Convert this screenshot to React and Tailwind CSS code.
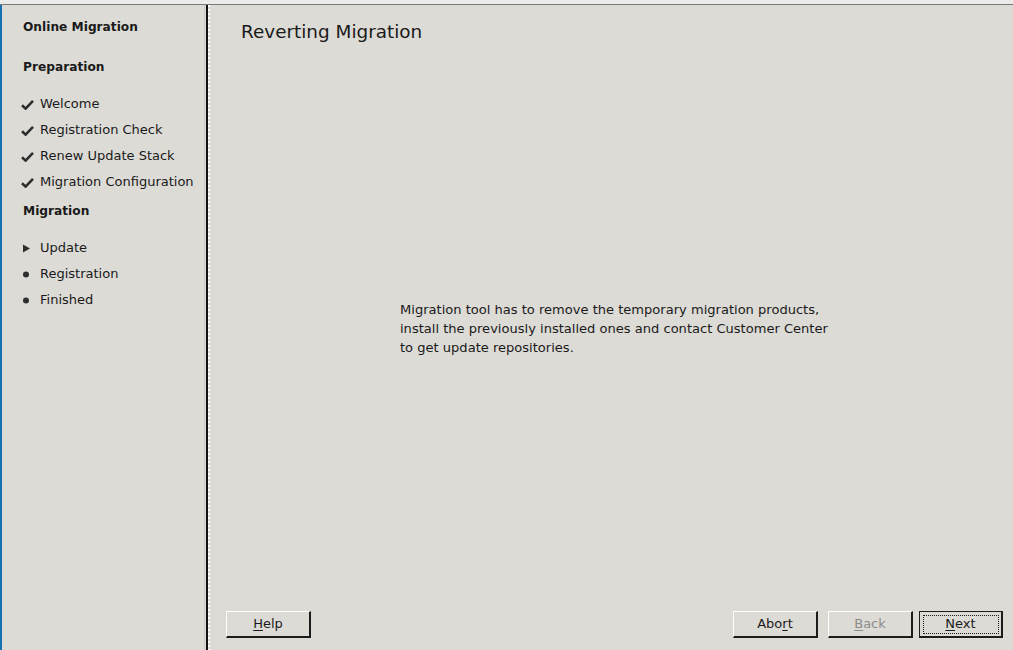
import React from "react";

const font = { fontFamily: '"DejaVu Sans", "Liberation Sans", sans-serif' };

function Check() {
  return (
    <svg width="13" height="11" viewBox="0 0 13 11" className="shrink-0">
      <path d="M1 6.2 L4.6 9.6 L12 1.8" stroke="#2e2e2e" strokeWidth="2.6" fill="none" strokeLinejoin="miter" />
    </svg>
  );
}

function Tri() {
  return (
    <svg width="13" height="11" viewBox="0 0 13 11" className="shrink-0">
      <path d="M2 1.5 L9 5.5 L2 9.5 Z" fill="#2e2e2e" />
    </svg>
  );
}

function Dot() {
  return (
    <svg width="13" height="11" viewBox="0 0 13 11" className="shrink-0">
      <circle cx="5" cy="5.5" r="3" fill="#2e2e2e" />
    </svg>
  );
}

function Item({ icon, children }) {
  return (
    <div className="flex items-center h-[26px] pl-[19px] gap-[6px] text-[13px] text-[#1a1a1a] whitespace-nowrap">
      {icon}
      <span>{children}</span>
    </div>
  );
}

function Btn({ children, disabled, className = "" }) {
  return (
    <div
      className={
        "w-[85px] h-[27px] flex items-center justify-center text-[13px] border-t border-l border-t-white border-l-white border-b-2 border-r-2 border-b-[#1c1c1c] border-r-[#1c1c1c] " +
        (disabled ? "text-[#8c8c8a] " : "text-[#1a1a1a] ") +
        className
      }
    >
      {children}
    </div>
  );
}

function FocusBtn({ children, className = "" }) {
  return (
    <div className={"w-[84px] h-[27px] border border-[#1c1c1c] border-b-2 border-r-2 flex items-center justify-center text-[13px] text-[#1a1a1a] " + className}>
      <div className="w-[76px] h-[19px] border border-dotted border-[#1c1c1c] flex items-center justify-center">
        {children}
      </div>
    </div>
  );
}

export default function App() {
  return (
    <div style={font} className="w-[1013px] h-[650px] bg-[#dcdbd6] flex flex-col overflow-hidden">
      <div className="h-[4px] bg-[#ebebea] shrink-0" />
      <div className="h-[1px] bg-[#7a7a78] shrink-0" />
      <div className="flex flex-1 min-h-0">
        <div className="w-[2px] bg-[#1572b0] shrink-0" />
        <div className="w-[202px] shrink-0 pt-[11px]">
          <div className="pl-[21px] h-[22px] flex items-center font-bold text-[12.2px] text-[#1a1a1a]">Online Migration</div>
          <div className="pl-[21px] h-[22px] mt-[18px] flex items-center font-bold text-[12.2px] text-[#1a1a1a]">Preparation</div>
          <div className="mt-[13px]">
            <Item icon={<Check />}>Welcome</Item>
            <Item icon={<Check />}>Registration Check</Item>
            <Item icon={<Check />}>Renew Update Stack</Item>
            <Item icon={<Check />}>Migration Configuration</Item>
          </div>
          <div className="pl-[21px] h-[22px] mt-[5px] flex items-center font-bold text-[12.2px] text-[#1a1a1a]">Migration</div>
          <div className="mt-[13px]">
            <Item icon={<Tri />}>Update</Item>
            <Item icon={<Dot />}>Registration</Item>
            <Item icon={<Dot />}>Finished</Item>
          </div>
        </div>
        <div className="w-[1px] bg-[#c9c8c4] shrink-0" />
        <div className="w-[1px] bg-[#dcdbd6] shrink-0" />
        <div className="w-[2px] bg-[#101010] shrink-0" />
        <div
          className="w-[2px] shrink-0"
          style={{ backgroundImage: "repeating-linear-gradient(to bottom, #ffffff 0 2px, #dcdbd6 2px 4px)" }}
        />
        <div className="flex-1 flex flex-col min-w-0">
          <div className="pl-[31px] pt-[16px] text-[18.4px] text-[#1a1a1a] leading-[22px]">Reverting Migration</div>
          <div className="flex-1 flex items-center pl-[190px]">
            <p className="text-[13.05px] leading-[19px] text-[#1a1a1a] mt-[8px]">
              Migration tool has to remove the temporary migration products,
              <br />
              install the previously installed ones and contact Customer Center
              <br />
              to get update repositories.
            </p>
          </div>
          <div className="flex items-center pl-[16px] pr-[10px] pb-[12px] pt-[6px]">
            <Btn>
              <span><span className="underline underline-offset-2">H</span>elp</span>
            </Btn>
            <div className="flex-1" />
            <Btn>
              <span>Abo<span className="underline underline-offset-2">r</span>t</span>
            </Btn>
            <Btn disabled className="ml-[10px]">
              <span><span className="underline underline-offset-2">B</span>ack</span>
            </Btn>
            <FocusBtn className="ml-[6px]">
              <span><span className="underline underline-offset-2">N</span>ext</span>
            </FocusBtn>
          </div>
        </div>
      </div>
    </div>
  );
}
